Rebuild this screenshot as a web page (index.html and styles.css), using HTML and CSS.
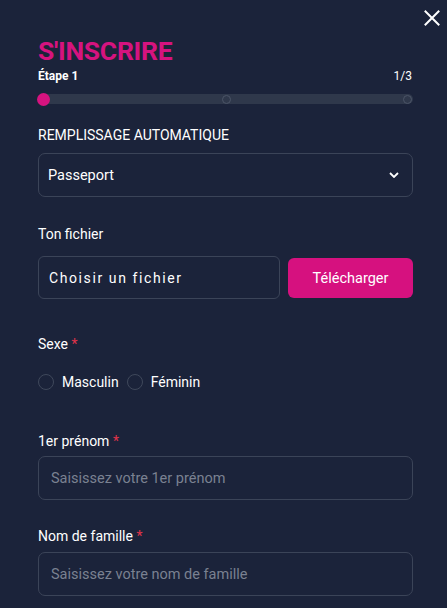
FILE: index.html
```html
<!DOCTYPE html>
<html lang="fr">
<head>
<meta charset="utf-8">
<link rel="stylesheet" href="styles.css">
</head>
<body>
<div class="modal">
  <button class="close" aria-label="Fermer">
    <svg width="16" height="16" viewBox="0 0 16 16"><path d="M1.5 1.5L14.5 14.5M14.5 1.5L1.5 14.5" stroke="#fff" stroke-width="2" stroke-linecap="square"/></svg>
  </button>
  <div class="content">
    <h1 class="title">S'INSCRIRE</h1>
    <div class="step-row">
      <span class="step-name">Étape 1</span>
      <span class="step-count">1/3</span>
    </div>
    <div class="progress">
      <span class="dot active"></span>
      <span class="dot"></span>
      <span class="dot"></span>
    </div>

    <div class="field auto">
      <label class="label upper">REMPLISSAGE AUTOMATIQUE</label>
      <div class="select">
        <span>Passeport</span>
        <svg width="10" height="6" viewBox="0 0 10 6"><path d="M1 1L5 5L9 1" stroke="#fff" stroke-width="1.8" fill="none"/></svg>
      </div>
    </div>

    <div class="field file-field">
      <label class="label">Ton fichier</label>
      <div class="file-row">
        <div class="file-box">Choisir un fichier</div>
        <button class="upload">Télécharger</button>
      </div>
    </div>

    <div class="field sex-field">
      <label class="label">Sexe <span class="req">*</span></label>
      <div class="radios">
        <label class="radio"><span class="circle"></span>Masculin</label>
        <label class="radio"><span class="circle"></span>Féminin</label>
      </div>
    </div>

    <div class="field name-field">
      <label class="label">1er prénom <span class="req">*</span></label>
      <div class="input">Saisissez votre 1er prénom</div>
    </div>

    <div class="field name-field last">
      <label class="label">Nom de famille <span class="req">*</span></label>
      <div class="input">Saisissez votre nom de famille</div>
    </div>
  </div>
</div>
</body>
</html>
```

FILE: styles.css
```css
* { box-sizing: border-box; }
html, body {
  margin: 0;
  padding: 0;
  background: #1b233a;
  font-family: Roboto, "Liberation Sans", sans-serif;
  color: #fff;
}
.modal {
  position: relative;
  width: 447px;
  height: 608px;
  overflow: hidden;
}
.close {
  position: absolute;
  top: 10px;
  left: 424px;
  width: 16px;
  height: 16px;
  padding: 0;
  border: 0;
  background: none;
  display: block;
}
.close svg { display: block; }
.content {
  padding: 36px 34px 0 38px;
}
.title {
  margin: 0;
  font-size: 26.5px;
  line-height: 30px;
  font-weight: 700;
  color: #d6137f;
  letter-spacing: -0.3px;
}
.step-row {
  display: flex;
  justify-content: space-between;
  margin-top: 3px;
  font-size: 12px;
  line-height: 14px;
}
.step-name { font-weight: 700; }
.step-count { font-weight: 400; padding-right: 1px; }
.progress {
  margin-top: 11px;
  height: 10px;
  border-radius: 5px;
  background: #2f384b;
  display: flex;
  justify-content: space-between;
  align-items: center;
  padding-right: 1px;
}
.dot {
  width: 9px;
  height: 9px;
  border-radius: 50%;
  border: 1px solid #4c5568;
  background: #2f384b;
}
.dot.active {
  width: 13px;
  height: 13px;
  border: 0;
  background: #d6137f;
  margin-left: -1px;
}
.field { display: flex; flex-direction: column; }
.label {
  font-size: 14px;
  line-height: 16px;
  color: #fff;
}
.upper { font-size: 14px; }
.req { color: #e0334a; }
.auto { margin-top: 23px; }
.auto .label { margin-bottom: 10px; }
.select {
  height: 44px;
  border: 1px solid #3b4458;
  border-radius: 7px;
  display: flex;
  align-items: center;
  justify-content: space-between;
  padding: 0 13px 0 9px;
  font-size: 14.5px;
}
.file-field { margin-top: 29px; }
.file-field .label { margin-bottom: 14px; }
.file-row {
  display: flex;
  align-items: center;
  gap: 8px;
}
.file-box {
  width: 242px;
  height: 43px;
  border: 1px solid #3b4458;
  border-radius: 6px;
  display: flex;
  align-items: center;
  padding-left: 10px;
  font-size: 14px;
  letter-spacing: 1.6px;
}
.upload {
  flex: 1;
  height: 40px;
  border: 0;
  border-radius: 6px;
  background: #d6117f;
  color: #fff;
  font-family: Roboto, "Liberation Sans", sans-serif;
  font-size: 14.5px;
  margin-top: 1px;
}
.sex-field { margin-top: 37px; }
.radios {
  display: flex;
  gap: 8px;
  margin-top: 22px;
}
.radio {
  display: flex;
  align-items: center;
  font-size: 14px;
  gap: 8px;
}
.circle {
  width: 16px;
  height: 16px;
  border-radius: 50%;
  border: 1px solid #3f485b;
}
.name-field { margin-top: 43px; }
.name-field.last { margin-top: 28px; }
.name-field .label { margin-bottom: 7px; }
.name-field.last .label { margin-bottom: 8px; }
.input {
  height: 44px;
  border: 1px solid #3b4458;
  border-radius: 7px;
  display: flex;
  align-items: center;
  padding-left: 12px;
  font-size: 14.5px;
  color: #7a8191;
}
```
